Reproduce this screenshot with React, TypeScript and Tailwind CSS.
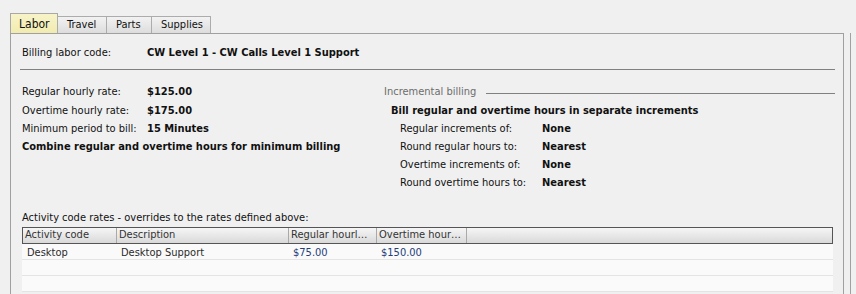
import React from "react";

const FONT = { fontFamily: '"DejaVu Sans Condensed", "DejaVu Sans", "Liberation Sans", sans-serif', fontStretch: "condensed" as const };

const tabs = [
  { label: "Labor", w: "w-[48px]", active: true },
  { label: "Travel", w: "w-[50px]" },
  { label: "Parts", w: "w-[46px]" },
  { label: "Supplies", w: "w-[60px]" },
];

function Field({ label, value, labelW }: { label: string; value: string; labelW: string }) {
  return (
    <div className="flex h-[18px] items-center">
      <span className={`${labelW} shrink-0`}>{label}</span>
      <span className="font-bold">{value}</span>
    </div>
  );
}

const cols = [
  { title: "Activity code", w: "w-[94px]" },
  { title: "Description", w: "w-[172px]" },
  { title: "Regular hourl…", w: "w-[88px]" },
  { title: "Overtime hour…", w: "w-[90px]" },
];

const rows = [["Desktop", "Desktop Support", "$75.00", "$150.00"], ["", "", "", ""], ["", "", "", ""]];

export default function App() {
  return (
    <div className="h-[294px] w-[856px] overflow-hidden bg-[#f0f0f0] text-[11px] text-[#111]" style={FONT}>
      {/* tab strip */}
      <div className="flex items-end pl-[10px] pt-[13px]">
        {tabs.map((t) =>
          t.active ? (
            <div
              key={t.label}
              className={`${t.w} flex h-[20px] items-center border border-b-0 border-[#a8a8a8] bg-gradient-to-b from-[#f8f4c8] to-[#f1ebb0] pl-[8px] text-[12px] text-[#111]`}
            >
              {t.label}
            </div>
          ) : (
            <div
              key={t.label}
              className={`${t.w} -ml-px flex h-[17px] items-center border border-b-0 border-[#acacac] bg-gradient-to-b from-[#f2f2f2] to-[#dddddd] pl-[9px] text-[#111] first:ml-0`}
            >
              {t.label}
            </div>
          )
        )}
      </div>

      <div className="flex">
        {/* tab panel */}
        <div className="ml-[10px] h-[261px] w-[834px] border-l border-r border-t border-[#a0a0a0] pl-[11px] pr-[8px] pt-[10px]">
          <Field label="Billing labor code:" value="CW Level 1 - CW Calls Level 1 Support" labelW="w-[125px]" />
          <div className="-ml-[2px] mt-[7px] h-px w-[815px] bg-[#808080]" />

          <div className="mt-[13px] flex">
            <div className="w-[362px] shrink-0">
              <Field label="Regular hourly rate:" value="$125.00" labelW="w-[125px]" />
              <div className="mt-px">
                <Field label="Overtime hourly rate:" value="$175.00" labelW="w-[125px]" />
                <Field label="Minimum period to bill:" value="15 Minutes" labelW="w-[125px]" />
                <div className="flex h-[18px] items-center font-bold">Combine regular and overtime hours for minimum billing</div>
              </div>
            </div>
            <div className="flex-1">
              <div className="flex h-[18px] items-center gap-[10px] text-[#6d6d6d]">
                <span>Incremental billing</span>
                <div className="mt-[2px] h-px flex-1 bg-[#808080]" />
              </div>
              <div className="mt-px flex h-[18px] items-center pl-[7px] font-bold">Bill regular and overtime hours in separate increments</div>
              <div className="pl-[16px]">
                <Field label="Regular increments of:" value="None" labelW="w-[142px]" />
                <Field label="Round regular hours to:" value="Nearest" labelW="w-[142px]" />
                <Field label="Overtime increments of:" value="None" labelW="w-[142px]" />
                <Field label="Round overtime hours to:" value="Nearest" labelW="w-[142px]" />
              </div>
            </div>
          </div>

          <div className="mt-[17px] flex h-[18px] items-center">Activity code rates - overrides to the rates defined above:</div>

          {/* grid */}
          <div className="w-[811px]">
            <div className="flex h-[17px] border border-[#555] bg-gradient-to-b from-[#f6f6f6] to-[#d9d9d9] text-[#333]">
              {cols.map((c) => (
                <div key={c.title} className={`${c.w} flex items-center overflow-hidden whitespace-nowrap border-r border-[#a9a9a9] pl-[2px]`}>
                  {c.title}
                </div>
              ))}
              <div className="flex-1" />
            </div>
            {rows.map((r, i) => (
              <div key={i} className="flex h-[16px] border-b border-[#e4e4e4] bg-[#fafafa] pt-[3px]">
                <div className="flex w-[94px] items-center pl-[5px] text-[#2b2b2b]">{r[0]}</div>
                <div className="flex w-[172px] items-center pl-[5px] text-[#2b2b2b]">{r[1]}</div>
                <div className="flex w-[88px] items-center pl-[5px] text-[#24407a]">{r[2]}</div>
                <div className="flex w-[90px] items-center pl-[5px] text-[#24407a]">{r[3]}</div>
                <div className="flex-1" />
              </div>
            ))}
          </div>
        </div>
        <div className="ml-[6px] h-[261px] w-px bg-[#a0a0a0]" />
      </div>
    </div>
  );
}
